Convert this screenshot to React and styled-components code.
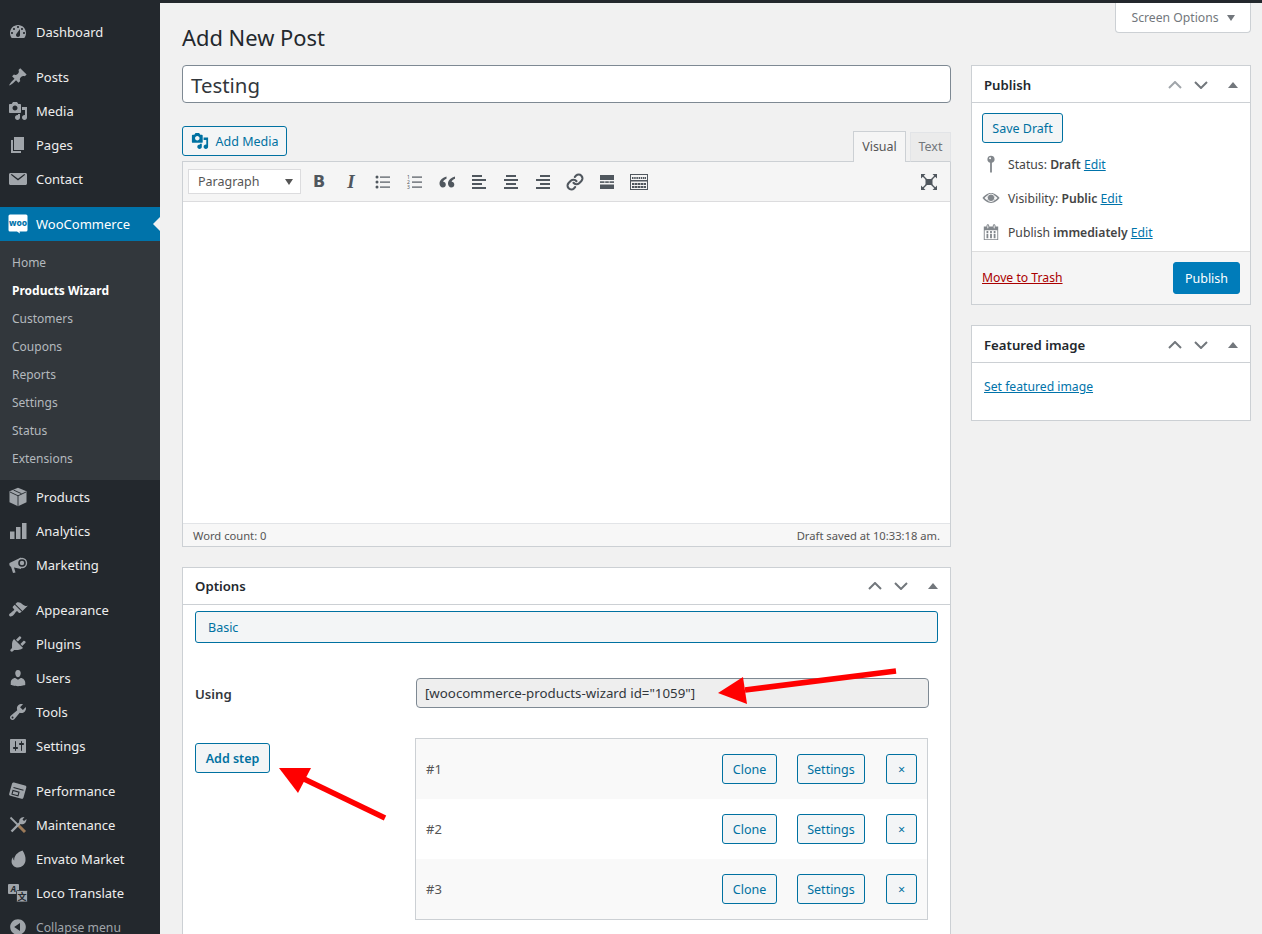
import React from "react"
import styled, { createGlobalStyle } from "styled-components"
import { Link as LinkIcon } from "lucide-react"

const GlobalStyle = createGlobalStyle`
  html, body {
    margin: 0;
    height: 934px;
    overflow: hidden;
    background: #f1f1f1;
    color: #444;
    font-family: "Noto Sans", "Open Sans", sans-serif;
    font-size: 13px;
  }
  * { box-sizing: border-box; }
`

const Shell = styled.div`
  position: relative;
  display: flex;
  width: 1262px;
  height: 934px;
  overflow: hidden;
`

/* ---------- admin menu ---------- */

const Sidebar = styled.nav`
  width: 160px;
  flex: none;
  background: #23282d;
  padding-top: 15px;
`

const MenuItem = styled.div`
  display: flex;
  align-items: center;
  gap: 8px;
  height: 34px;
  padding-left: 8px;
  margin-top: ${p => (p.$sep ? "11px" : "0")};
  color: ${p => (p.$muted ? "#a0a5aa" : "#eee")};
  font-size: ${p => (p.$muted ? "12.2px" : "13px")};
  position: relative;
  background: ${p => (p.$active ? "#0073aa" : "transparent")};
  ${p => p.$active && `
    color: #fff;
    &::after {
      content: "";
      position: absolute;
      right: 0;
      top: 10px;
      border: 7px solid transparent;
      border-right-color: #f1f1f1;
      border-left: 0;
    }
  `}
`

const SubMenu = styled.div`
  background: #32373c;
  padding: 8px 0 7px;
`

const SubItem = styled.div`
  height: 28px;
  line-height: 28px;
  padding-left: 12px;
  font-size: 12px;
  color: ${p => (p.$current ? "#fff" : "#b4b9be")};
  font-weight: ${p => (p.$current ? 700 : 400)};
`

const Glyph = styled.svg`
  width: ${p => p.$size || 20}px;
  height: ${p => p.$size || 20}px;
  flex: none;
  fill: ${p => p.$color || "#a0a5aa"};
  display: block;
`

/* ---------- content ---------- */

const Main = styled.main`
  flex: 1;
  min-width: 0;
  padding: 0 11px 0 22px;
  position: relative;
`

const AdminStrip = styled.div`
  height: 3px;
  background: #23282d;
  margin: 0 -11px 0 -22px;
`

const ScreenOptions = styled.button`
  position: absolute;
  top: 3px;
  right: 11px;
  width: 136px;
  height: 30px;
  background: #fff;
  border: 1px solid #ccd0d4;
  border-top: 0;
  border-radius: 0 0 4px 4px;
  color: #72777c;
  font: inherit;
  font-size: 12.2px;
  display: flex;
  align-items: center;
  justify-content: center;
  gap: 8px;
  &::after {
    content: "";
    border: 4.5px solid transparent;
    border-top: 6px solid #72777c;
    border-bottom: 0;
  }
`

const Title = styled.h1`
  margin: 20px 0 12px;
  font-size: 21.9px;
  line-height: 30px;
  font-weight: 400;
  color: #23282d;
`

const Columns = styled.div`
  display: flex;
  gap: 20px;
  align-items: flex-start;
`

const LeftColumn = styled.div`
  width: 769px;
  flex: none;
`

const RightColumn = styled.aside`
  width: 280px;
  flex: none;
  display: flex;
  flex-direction: column;
  gap: 20px;
`

const TitleInput = styled.div`
  height: 38px;
  background: #fff;
  border: 1px solid #7e8993;
  border-radius: 4px;
  padding: 0 8px;
  font-size: 20.4px;
  line-height: 38px;
  color: #32373c;
`

const EditorTools = styled.div`
  display: flex;
  align-items: flex-end;
  justify-content: space-between;
  margin-top: 23px;
  height: 35px;
`

const Button = styled.button`
  display: inline-flex;
  align-items: center;
  justify-content: center;
  gap: 7px;
  height: 30px;
  width: ${p => p.$w}px;
  flex: none;
  padding: 0;
  background: #f3f5f6;
  border: 1px solid #0071a1;
  border-radius: 3px;
  color: #0071a1;
  font: inherit;
  font-size: 12.5px;
  font-weight: ${p => (p.$bold ? 600 : 400)};
`

const MediaButton = styled(Button)`
  align-self: flex-start;
`

const AddStepButton = styled(Button)`
  margin-top: 5px;
`

const RemoveButton = styled(Button)`
  margin-left: 1px;
`

const Tabs = styled.div`
  display: flex;
  gap: 4px;
  position: relative;
  top: 1px;
  align-self: flex-end;
`

const Tab = styled.div`
  width: ${p => p.$w}px;
  height: ${p => (p.$active ? 31 : 30)}px;
  line-height: ${p => (p.$active ? 29 : 27)}px;
  text-align: center;
  font-size: 12.5px;
  color: ${p => (p.$active ? "#555" : "#72777c")};
  background: ${p => (p.$active ? "#f5f5f5" : "#ebebeb")};
  border: 1px solid ${p => (p.$active ? "#ccd0d4" : "#e2e4e7")};
  border-bottom: ${p => (p.$active ? "0" : "1px solid #ccd0d4")};
  align-self: flex-end;
  position: relative;
  z-index: 1;
`

const Editor = styled.div`
  border: 1px solid #ccd0d4;
  background: #fff;
`

const Toolbar = styled.div`
  height: 40px;
  background: #f5f5f5;
  border-bottom: 1px solid #dcdcde;
  display: flex;
  align-items: center;
  padding: 0 5px 0 5px;
`

const FormatSelect = styled.div`
  width: 113px;
  height: 25px;
  background: #fff;
  border: 1px solid #dcdcde;
  padding-left: 9px;
  margin-right: 2px;
  font-size: 12.5px;
  line-height: 24px;
  color: #555;
  position: relative;
  &::after {
    content: "";
    position: absolute;
    right: 7px;
    top: 9px;
    border: 4.5px solid transparent;
    border-top: 6px solid #555;
    border-bottom: 0;
  }
`

const ToolButton = styled.div`
  width: 32px;
  height: 30px;
  display: flex;
  align-items: center;
  justify-content: center;
  color: #50575e;
  margin-left: ${p => (p.$push ? "auto" : "0")};
`

const ToolLetter = styled(ToolButton)`
  font-family: "DejaVu Sans", sans-serif;
  font-size: 16px;
  font-weight: 700;
  font-style: ${p => (p.$italic ? "italic" : "normal")};
  ${p => p.$italic && `font-family: "Liberation Serif", serif; font-size: 19px;`}
`

const EditorBody = styled.div`
  height: 321px;
  background: #fff;
`

const StatusBar = styled.div`
  height: 23px;
  background: #f7f7f7;
  border-top: 1px solid #e2e4e7;
  display: flex;
  align-items: center;
  justify-content: space-between;
  padding: 1px 10px 0;
  font-size: 11.2px;
  color: #555;
`

const Box = styled.section`
  background: #fff;
  border: 1px solid #ccd0d4;
  margin-top: ${p => p.$top || 0}px;
  height: ${p => p.$h}px;
`

const BoxHeader = styled.header`
  height: 37px;
  border-bottom: 1px solid #ccd0d4;
  padding: ${p => (p.$low ? "2px" : "0")} 12px 0;
  display: flex;
  align-items: center;
  justify-content: space-between;
  font-size: 13.2px;
  font-weight: 600;
  color: #23282d;
`

const BoxControls = styled.div`
  display: flex;
  align-items: center;
  gap: 12px;
  color: #72777c;
`

const Collapse = styled.span`
  margin-left: 8px;
  border: 5px solid transparent;
  border-bottom: 6px solid #72777c;
  border-top: 0;
`

const PublishBody = styled.div`
  padding: 10px 10px 2px;
`

const MiscList = styled.div`
  margin-top: 4px;
`

const MiscRow = styled.div`
  display: flex;
  align-items: center;
  gap: 8px;
  height: 34px;
  font-size: 12.2px;
  color: #444;
  b { font-weight: 600; }
`

const MiscIcon = styled.span`
  width: 18px;
  flex: none;
  display: flex;
  justify-content: center;
`

const TextLink = styled.a`
  color: #0073aa;
  text-decoration: underline;
  font-size: 12.2px;
`

const TrashLink = styled(TextLink)`
  color: #a00;
  margin-bottom: 2px;
`

const PublishFooter = styled.div`
  height: 53px;
  border-top: 1px solid #ddd;
  background: #f5f5f5;
  padding: 0 10px;
  display: flex;
  align-items: center;
  justify-content: space-between;
`

const PrimaryButton = styled.button`
  width: 67px;
  height: 32px;
  background: #007cba;
  border: 1px solid #007cba;
  border-radius: 3px;
  color: #fff;
  font: inherit;
  font-size: 12.5px;
`

const FeaturedBody = styled.div`
  padding: 14px 12px;
  line-height: 18px;
`

const OptionsBody = styled.div`
  padding: 6px 12px 0;
`

const WideTab = styled.div`
  height: 32px;
  line-height: 32px;
  background: #f3f5f6;
  border: 1px solid #0071a1;
  border-radius: 3px;
  padding-left: 12px;
  color: #0071a1;
  font-size: 12.5px;
`

const FieldRow = styled.div`
  display: grid;
  grid-template-columns: 220px 513px;
  margin-top: ${p => p.$top}px;
  align-items: ${p => (p.$center ? "center" : "start")};
`

const FieldLabel = styled.label`
  font-size: 13.2px;
  font-weight: 600;
  color: #32373c;
  margin-top: 2px;
`

const ShortcodeInput = styled.div`
  height: 30px;
  line-height: 28px;
  margin-left: 1px;
  margin-right: -1px;
  background: #eee;
  border: 1px solid #7e8993;
  border-radius: 4px;
  padding-left: 8px;
  font-size: 13.3px;
  color: #32373c;
`

const StepTable = styled.div`
  border: 1px solid #ccd0d4;
`

const StepRow = styled.div`
  height: 60px;
  display: flex;
  align-items: center;
  gap: 20px;
  padding: 0 10px;
  background: ${p => (p.$odd ? "#f9f9f9" : "#fff")};
`

const StepName = styled.span`
  margin-right: auto;
  color: #555;
  font-size: 13px;
`

const Annotations = styled.svg`
  position: absolute;
  left: 0;
  top: 0;
  width: 1262px;
  height: 934px;
  pointer-events: none;
`

/* ---------- drawings ---------- */

const paths = {
  dashboard: "M3.76 16h12.48c1.1-1.37 1.76-3.11 1.76-5 0-4.42-3.58-8-8-8s-8 3.58-8 8c0 1.89.66 3.63 1.76 5zM10 4c.55 0 1 .45 1 1s-.45 1-1 1-1-.45-1-1 .45-1 1-1zM6 6c.55 0 1 .45 1 1s-.45 1-1 1-1-.45-1-1 .45-1 1-1zm8 0c.55 0 1 .45 1 1s-.45 1-1 1-1-.45-1-1 .45-1 1-1zm-5.37 5.55L12 7v6c0 1.1-.9 2-2 2s-2-.9-2-2c0-.57.24-1.08.63-1.45zM4 10c.55 0 1 .45 1 1s-.45 1-1 1-1-.45-1-1 .45-1 1-1zm12 0c.55 0 1 .45 1 1s-.45 1-1 1-1-.45-1-1 .45-1 1-1z",
  pin: "M10.44 3.02l1.82-1.82 6.36 6.35-1.83 1.82c-1.05-.68-2.48-.57-3.41.36l-.75.75c-.92.93-1.04 2.35-.35 3.41l-1.83 1.82-2.41-2.41-2.8 2.79c-.42.42-3.38 2.71-3.8 2.29s1.86-3.39 2.28-3.81l2.79-2.79L4.1 9.36l1.83-1.82c1.05.69 2.48.57 3.4-.36l.75-.75c.93-.92 1.05-2.35.36-3.41z",
  media: "M13 11V4c0-.55-.45-1-1-1h-1.67L9 1H5L3.67 3H2c-.55 0-1 .45-1 1v7c0 .55.45 1 1 1h10c.55 0 1-.45 1-1zM7 4.5c1.38 0 2.5 1.12 2.5 2.5S8.38 9.5 7 9.5 4.5 8.38 4.5 7 5.62 4.5 7 4.5zM14 6h5v10.5c0 1.38-1.12 2.5-2.5 2.5S14 17.88 14 16.5s1.12-2.5 2.5-2.5c.17 0 .34.02.5.05V9h-3V6zm-4 8.05V13h2v3.5c0 1.38-1.12 2.5-2.5 2.5S7 17.88 7 16.5 8.12 14 9.5 14c.17 0 .34.02.5.05z",
  pages: "M6 15V2h10v13H6zm-1 1h8v2H3V5h2v11z",
  mail: "M2.5 4h15c.8 0 1.5.7 1.5 1.5v9c0 .8-.7 1.5-1.5 1.5h-15C1.7 16 1 15.3 1 14.5v-9C1 4.7 1.7 4 2.5 4zm.3 1.8L10 11.5l7.2-5.7-.9-.8L10 9.8 3.7 5z",
  appearance: "M14.48 11.06L7.41 3.99l1.5-1.5c.5-.56 2.3-.47 3.51.32 1.21.8 1.43 1.28 2.91 2.1 1.18.64 2.45 1.26 4.45.85zm-.71.71L6.7 4.7 4.93 6.47c-.39.39-.39 1.02 0 1.41l1.06 1.06c.39.39.39 1.03 0 1.42-.6.6-1.43 1.11-2.21 1.69-.35.26-.7.53-1.01.84C1.43 13.23.4 14.89 1.56 16.05c1.15 1.15 2.81.12 4.16-1.21.31-.31.58-.66.84-1.01.58-.78 1.09-1.61 1.69-2.21.39-.39 1.02-.39 1.41 0l1.06 1.06c.39.39 1.02.39 1.41 0z",
  plugins: "M13.11 4.36L9.87 7.6 8 5.73l3.24-3.24c.35-.34 1.05-.2 1.56.32.52.51.66 1.21.31 1.55zm-8 1.77l.91-1.12 9.01 9.01-1.19.84c-.71.71-2.63 1.16-3.82 1.16H6.14L4.9 17.26c-.59.59-1.54.59-2.12 0-.59-.58-.59-1.53 0-2.12l1.24-1.24v-3.88c0-1.13.4-3.19 1.09-3.89zm7.26 3.97l3.24-3.24c.34-.35 1.04-.21 1.55.31.52.51.66 1.21.31 1.55l-3.24 3.25z",
  users: "M10 9.25c-2.27 0-2.73-3.44-2.73-3.44C7 4.02 7.82 2 9.97 2c2.16 0 2.98 2.02 2.71 3.81 0 0-.41 3.44-2.68 3.44zm0 2.57L12.72 10c2.39 0 4.52 2.33 4.52 4.53v2.49s-3.65 1.13-7.24 1.13c-3.65 0-7.24-1.13-7.24-1.13v-2.49c0-2.25 1.94-4.48 4.47-4.48z",
  tools: "M16.68 9.77c-1.34 1.34-3.3 1.67-4.95.99l-5.41 6.52c-.99.99-2.59.99-3.58 0s-.99-2.59 0-3.57l6.52-5.42c-.68-1.65-.35-3.61.99-4.95 1.28-1.28 3.12-1.62 4.72-1.06l-2.89 2.89 2.82 2.82 2.86-2.87c.53 1.58.18 3.39-1.08 4.65zM3.81 16.21c.4.39 1.04.39 1.43 0 .4-.4.4-1.04 0-1.43-.39-.4-1.03-.4-1.43 0-.39.39-.39 1.03 0 1.43z",
  settings: "M18 16V4c0-.55-.45-1-1-1H3c-.55 0-1 .45-1 1v12c0 .55.45 1 1 1h14c.55 0 1-.45 1-1zM8 11h1c.55 0 1 .45 1 1s-.45 1-1 1H8v1.5c0 .28-.22.5-.5.5s-.5-.22-.5-.5V13H6c-.55 0-1-.45-1-1s.45-1 1-1h1V5.5c0-.28.22-.5.5-.5s.5.22.5.5V11zm5-2h-1c-.55 0-1-.45-1-1s.45-1 1-1h1V5.5c0-.28.22-.5.5-.5s.5.22.5.5V7h1c.55 0 1 .45 1 1s-.45 1-1 1h-1v5.5c0 .28-.22.5-.5.5s-.5-.22-.5-.5V9z",
  leaf: "M14.5 1.5c2 3 3.4 6 3 10-.4 4-3.6 7-7.5 7s-6.8-3-6.4-6.8c.2-1.6.9-3 1.6-3.7-.1 1.7.2 3 1 3.4C5.8 7 9.5 3 14.5 1.5z",
  collapse: "M10 2.16c4.33 0 7.84 3.51 7.84 7.84s-3.51 7.84-7.84 7.84S2.16 14.33 2.16 10 5.71 2.16 10 2.16zm2 11.72V6.12L6.18 9.97z",
  bars: "M2 10.5h4.5V18H2zM8 6h4.5v12H8zM14 2h4.5v16H14z",
  calendar: "M15 4h3v15H2V4h3V3c0-.41.15-.76.44-1.06.29-.29.65-.44 1.06-.44s.77.15 1.06.44c.29.3.44.65.44 1.06v1h4V3c0-.41.15-.76.44-1.06.29-.29.65-.44 1.06-.44s.77.15 1.06.44c.29.3.44.65.44 1.06v1zM6 5.5V3c0-.27.2-.5.5-.5S7 2.73 7 3v2.500c0 .27-.2.5-.5.5S6 5.77 6 5.5zm7 0V3c0-.27.2-.5.5-.5s.5.23.5.5v2.500c0 .27-.2.5-.5.5s-.5-.23-.5-.5zM17 18V8H3v10h14zM5 9h2v2H5V9zm4 0h2v2H9V9zm4 0h2v2h-2V9zM5 12h2v5H5zm4 0h2v5H9zm4 0h2v5h-2z",
  map: "M10 .8a4 4 0 011 7.87V19.5H9V8.67A4 4 0 0110 .8zM9 2.600a1.100 1.100 0 100 2.200 1.100 1.100 0 000-2.200z",
}

const Dash = ({ name, size, color }) => (
  <Glyph viewBox="0 0 20 20" $size={size} $color={color}>
    <path fillRule="evenodd" d={paths[name]} />
  </Glyph>
)

const EyeIcon = () => (
  <Glyph viewBox="0 0 20 20" $size={18} $color="#82878c">
    <path d="M10 4.5c4.2 0 7.500 3 9.500 5.500-2 2.500-5.300 5.500-9.500 5.500S2.500 12.500.5 10C2.500 7.500 5.800 4.500 10 4.500z" />
    <circle cx="10" cy="9.800" r="4.200" fill="none" stroke="#fff" strokeWidth="1" />
    <path d="M2.800 10c.9-1.100 2-2.100 3.200-2.800-.4.800-.6 1.700-.6 2.700s.2 1.900.7 2.800C4.800 12 3.700 11.100 2.800 10zM17.200 10c-.9 1.100-2 2-3.300 2.700.5-.9.700-1.800.7-2.800s-.2-1.900-.6-2.700c1.200.7 2.300 1.700 3.200 2.800z" fill="#fff" />
  </Glyph>
)

const WooLogo = () => (
  <Glyph viewBox="0 0 20 20">
    <path fill="#fff" d="M2 .5h16a1.500 1.500 0 011.500 1.500v14A1.500 1.500 0 0118 17.500h-6.500l.5 2-3-2H2A1.500 1.500 0 01.5 16V2A1.500 1.500 0 012 .5z" />
    <text x="10" y="11.500" textAnchor="middle" fill="#0073aa" fontFamily="Noto Sans, sans-serif" fontSize="8.500" fontWeight="800">woo</text>
  </Glyph>
)

const BoxIcon = () => (
  <Glyph viewBox="0 0 20 20">
    <path d="M10 .8l8.500 3.500v10.900L10 19.200 1.500 15.200V4.300z" />
    <path d="M2 5l8 3.800L18 5M10 8.800V19M5.500 3l8 3.700" fill="none" stroke="#23282d" strokeWidth=".9" />
  </Glyph>
)

const MegaphoneIcon = () => (
  <Glyph viewBox="0 0 20 20">
    <path d="M1.500 8L13 2.500v11.500l-7-1.500 1.500 5-2.500.5-2-6.200C1.500 11.500 1 9.500 1.500 8z" />
    <circle cx="14" cy="8" r="5.200" />
    <circle cx="14" cy="8" r="3.800" fill="#23282d" />
    <circle cx="14" cy="8" r="2.200" />
  </Glyph>
)

const PerformanceIcon = () => (
  <Glyph viewBox="0 0 20 20">
    <path d="M6 1.500l11 3c1 .3 1.600 1 1.300 2l-2.800 10c-.3 1-1 1.600-2 1.300l-11-3c-1-.3-1.600-1-1.300-2l2.800-10c.3-1 1-1.600 2-1.300z" />
    <path d="M5.500 6.500l10 2.700M5 9.500l-1 3.700 6 1.600 1-3.700z" fill="none" stroke="#23282d" strokeWidth="1.100" />
  </Glyph>
)

const WrenchCross = () => (
  <Glyph viewBox="0 0 20 20">
    <path d="M10 10l7 7" stroke="#9c7a58" strokeWidth="3" fill="none" />
    <path d="M2.500 2.500l8 8" stroke="#a0a5aa" strokeWidth="1.800" fill="none" />
    <path d="M3.500 16.500L12.500 7.500" stroke="#a0a5aa" strokeWidth="2.400" fill="none" />
    <path d="M11.500 8c-1-2.800.5-6 5-6l-2 2.500 1.500 1.500 2.500-2c0 4.500-3.500 6-6 5z" />
  </Glyph>
)

const LocoIcon = () => (
  <Glyph viewBox="0 0 20 20">
    <rect x="0" y="1" width="11" height="10" rx="1" />
    <text x="5.500" y="9" textAnchor="middle" fontSize="8.500" fontWeight="700" fontStyle="italic" fontFamily="Noto Sans, sans-serif" fill="#23282d">A</text>
    <rect x="8.500" y="7.500" width="11" height="11.500" rx="1" stroke="#23282d" strokeWidth=".8" />
    <text x="14" y="17" textAnchor="middle" fontSize="9" fontWeight="700" fontFamily="Noto Sans CJK SC, sans-serif" fill="#23282d">文</text>
  </Glyph>
)

const lines = rows => rows.map(([x, y, w, h = 2]) => <rect key={`${x}-${y}`} x={x} y={y} width={w} height={h} />)

const ToolIcon = ({ children }) => (
  <Glyph viewBox="0 0 20 20" $color="#50575e">{children}</Glyph>
)

const UnorderedIcon = () => (
  <ToolIcon>
    <circle cx="4" cy="5" r="1.500" /><circle cx="4" cy="10" r="1.500" /><circle cx="4" cy="15" r="1.500" />
    {lines([[7, 4.5, 10, 1.2], [7, 9.5, 10, 1.2], [7, 14.5, 10, 1.2]])}
  </ToolIcon>
)

const OrderedIcon = () => (
  <ToolIcon>
    <text x="2" y="7" fontSize="5" fontFamily="Noto Sans, sans-serif">1</text>
    <text x="2" y="12" fontSize="5" fontFamily="Noto Sans, sans-serif">2</text>
    <text x="2" y="17" fontSize="5" fontFamily="Noto Sans, sans-serif">3</text>
    {lines([[7, 4.5, 10, 1.2], [7, 9.5, 10, 1.2], [7, 14.5, 10, 1.2]])}
  </ToolIcon>
)

const QuoteIcon = () => (
  <ToolIcon>
    <path d="M9.500 4.500C6 5.500 2.500 8 2.500 11.500c0 2.200 1.400 4 3.300 4s3-1.300 3-3-1.100-2.800-2.700-2.800c.4-1.200 1.800-2.300 3.400-3zM18 4.500c-3.500 1-7 3.500-7 7 0 2.200 1.400 4 3.300 4s3-1.300 3-3-1.100-2.800-2.700-2.800c.4-1.200 1.800-2.300 3.400-3z" />
  </ToolIcon>
)

const AlignIcon = ({ rows }) => <ToolIcon>{lines(rows)}</ToolIcon>

const alignLeft = [[3, 3, 10], [3, 7, 14], [3, 11, 10], [3, 15, 14]]
const alignCenter = [[5, 3, 10], [3, 7, 14], [5, 11, 10], [3, 15, 14]]
const alignRight = [[7, 3, 10], [3, 7, 14], [7, 11, 10], [3, 15, 14]]

const MoreIcon = () => (
  <ToolIcon>
    {lines([[3, 3, 14, 5], [3, 9.3, 4.5, 1.6], [8.2, 9.3, 3.6, 1.6], [12.5, 9.3, 4.5, 1.6], [3, 12.5, 14, 4.5]])}
  </ToolIcon>
)

const KitchenIcon = () => (
  <Glyph viewBox="0 0 20 20" $size={20} $color="#50575e">
    <path fillRule="evenodd" d="M1 2h18v16H1zM2 3v5h16V3zM2 9.500V17h16V9.500z" />
    {lines([[3, 5, 1.5], [5.2, 5, 1.5], [7.4, 5, 1.5], [9.6, 5, 1.5], [11.8, 5, 1.5], [14, 5, 1.5], [16, 5, 1],
      [3, 11, 2.5], [6, 11, 2.5], [9, 11, 2.5], [12, 11, 2.5], [15, 11, 2],
      [3, 14, 2.5], [6, 14, 2.5], [9, 14, 2.5], [12, 14, 2.5], [15, 14, 2]])}
  </Glyph>
)

const FullscreenIcon = () => (
  <ToolIcon>
    <path d="M6.500 7h7v6h-7z" />
    <path d="M2 2h4.500L2 6.500zM18 2v4.500L13.500 2zM2 18v-4.500L6.500 18zM18 18h-4.500L18 13.500z" />
    <path d="M3.500 3.500l4 4M16.500 3.500l-4 4M3.500 16.500l4-4M16.500 16.500l-4-4" stroke="#50575e" strokeWidth="1.400" />
  </ToolIcon>
)

const Controls = ({ faded }) => (
  <BoxControls>
    <svg width="14" height="8" viewBox="0 0 14 8" fill="none" stroke={faded ? "#a0a5aa" : "#72777c"} strokeWidth="2">
      <path d="M1 7l6-6 6 6" />
    </svg>
    <svg width="14" height="8" viewBox="0 0 14 8" fill="none" stroke="#72777c" strokeWidth="2">
      <path d="M1 1l6 6 6-6" />
    </svg>
    <Collapse />
  </BoxControls>
)

const menuTop = [
  { label: "Dashboard", icon: <Dash name="dashboard" /> },
  { label: "Posts", icon: <Dash name="pin" />, sep: true },
  { label: "Media", icon: <Dash name="media" /> },
  { label: "Pages", icon: <Dash name="pages" /> },
  { label: "Contact", icon: <Dash name="mail" /> },
]

const subItems = ["Home", "Products Wizard", "Customers", "Coupons", "Reports", "Settings", "Status", "Extensions"]

const menuBottom = [
  { label: "Products", icon: <BoxIcon /> },
  { label: "Analytics", icon: <Dash name="bars" /> },
  { label: "Marketing", icon: <MegaphoneIcon /> },
  { label: "Appearance", icon: <Dash name="appearance" />, sep: true },
  { label: "Plugins", icon: <Dash name="plugins" /> },
  { label: "Users", icon: <Dash name="users" /> },
  { label: "Tools", icon: <Dash name="tools" /> },
  { label: "Settings", icon: <Dash name="settings" /> },
  { label: "Performance", icon: <PerformanceIcon />, sep: true },
  { label: "Maintenance", icon: <WrenchCross /> },
  { label: "Envato Market", icon: <Dash name="leaf" /> },
  { label: "Loco Translate", icon: <LocoIcon /> },
  { label: "Collapse menu", icon: <Dash name="collapse" />, muted: true },
]

const steps = ["#1", "#2", "#3"]

export default function App() {
  return (
    <Shell>
      <GlobalStyle />
      <Sidebar>
        {menuTop.map(m => (
          <MenuItem key={m.label} $sep={m.sep}>{m.icon}{m.label}</MenuItem>
        ))}
        <MenuItem $sep $active><WooLogo />WooCommerce</MenuItem>
        <SubMenu>
          {subItems.map(s => (
            <SubItem key={s} $current={s === "Products Wizard"}>{s}</SubItem>
          ))}
        </SubMenu>
        {menuBottom.map(m => (
          <MenuItem key={m.label} $sep={m.sep} $muted={m.muted}>{m.icon}{m.label}</MenuItem>
        ))}
      </Sidebar>

      <Main>
        <AdminStrip />
        <ScreenOptions>Screen Options</ScreenOptions>
        <Title>Add New Post</Title>
        <Columns>
          <LeftColumn>
            <TitleInput>Testing</TitleInput>
            <EditorTools>
              <MediaButton $w={105}><Dash name="media" size={18} color="#0071a1" />Add Media</MediaButton>
              <Tabs>
                <Tab $w={53} $active>Visual</Tab>
                <Tab $w={41}>Text</Tab>
              </Tabs>
            </EditorTools>
            <Editor>
              <Toolbar>
                <FormatSelect>Paragraph</FormatSelect>
                <ToolLetter>B</ToolLetter>
                <ToolLetter $italic>I</ToolLetter>
                <ToolButton><UnorderedIcon /></ToolButton>
                <ToolButton><OrderedIcon /></ToolButton>
                <ToolButton><QuoteIcon /></ToolButton>
                <ToolButton><AlignIcon rows={alignLeft} /></ToolButton>
                <ToolButton><AlignIcon rows={alignCenter} /></ToolButton>
                <ToolButton><AlignIcon rows={alignRight} /></ToolButton>
                <ToolButton><LinkIcon size={18} strokeWidth={2.8} /></ToolButton>
                <ToolButton><MoreIcon /></ToolButton>
                <ToolButton><KitchenIcon /></ToolButton>
                <ToolButton $push><FullscreenIcon /></ToolButton>
              </Toolbar>
              <EditorBody />
              <StatusBar>
                <span>Word count: 0</span>
                <span>Draft saved at 10:33:18 am.</span>
              </StatusBar>
            </Editor>

            <Box $top={20} $h={500}>
              <BoxHeader>Options<Controls /></BoxHeader>
              <OptionsBody>
                <WideTab>Basic</WideTab>
                <FieldRow $top={35} $center>
                  <FieldLabel>Using</FieldLabel>
                  <ShortcodeInput>[woocommerce-products-wizard id="1059"]</ShortcodeInput>
                </FieldRow>
                <FieldRow $top={30}>
                  <AddStepButton $w={75} $bold>Add step</AddStepButton>
                  <StepTable>
                    {steps.map((s, i) => (
                      <StepRow key={s} $odd={i % 2 === 0}>
                        <StepName>{s}</StepName>
                        <Button $w={55}>Clone</Button>
                        <Button $w={68}>Settings</Button>
                        <RemoveButton $w={31}>×</RemoveButton>
                      </StepRow>
                    ))}
                  </StepTable>
                </FieldRow>
              </OptionsBody>
            </Box>
          </LeftColumn>

          <RightColumn>
            <Box $h={240}>
              <BoxHeader $low>Publish<Controls faded /></BoxHeader>
              <PublishBody>
                <Button $w={81}>Save Draft</Button>
                <MiscList>
                  <MiscRow><MiscIcon><Dash name="map" size={18} color="#82878c" /></MiscIcon><span>Status: <b>Draft</b> <TextLink>Edit</TextLink></span></MiscRow>
                  <MiscRow><MiscIcon><EyeIcon /></MiscIcon><span>Visibility: <b>Public</b> <TextLink>Edit</TextLink></span></MiscRow>
                  <MiscRow><MiscIcon><Dash name="calendar" size={18} color="#82878c" /></MiscIcon><span>Publish <b>immediately</b> <TextLink>Edit</TextLink></span></MiscRow>
                </MiscList>
              </PublishBody>
              <PublishFooter>
                <TrashLink>Move to Trash</TrashLink>
                <PrimaryButton>Publish</PrimaryButton>
              </PublishFooter>
            </Box>
            <Box $h={96}>
              <BoxHeader $low>Featured image<Controls /></BoxHeader>
              <FeaturedBody><TextLink>Set featured image</TextLink></FeaturedBody>
            </Box>
          </RightColumn>
        </Columns>
      </Main>

      <Annotations viewBox="0 0 1262 934">
        <path d="M896 671L745 690" stroke="#f00" strokeWidth="5.500" fill="none" />
        <path d="M718 693L743 677L747 704z" fill="#f00" />
        <path d="M385 818L302 778" stroke="#f00" strokeWidth="5.500" fill="none" />
        <path d="M279 768L311 768L298 793z" fill="#f00" />
      </Annotations>
    </Shell>
  )
}
